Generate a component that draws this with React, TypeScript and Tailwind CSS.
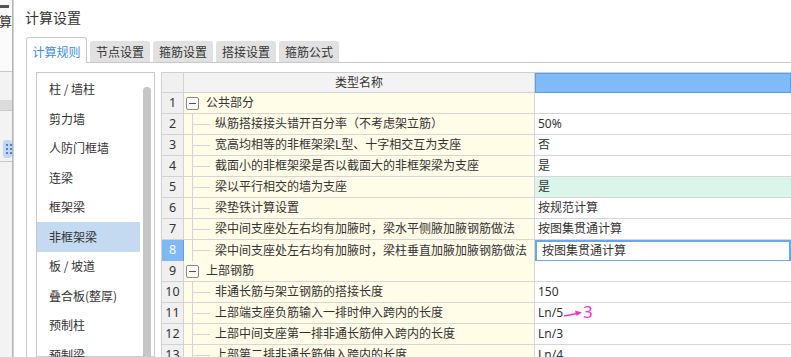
import React from "react";

type Row =
  | { n: number; group: true; name: string; value?: string }
  | { n: number; group?: false; name: string; value: string; green?: boolean; selected?: boolean; arrow?: boolean };

const rows: Row[] = [
  { n: 1, group: true, name: "公共部分" },
  { n: 2, name: "纵筋搭接接头错开百分率（不考虑架立筋）", value: "50%" },
  { n: 3, name: "宽高均相等的非框架梁L型、十字相交互为支座", value: "否" },
  { n: 4, name: "截面小的非框架梁是否以截面大的非框架梁为支座", value: "是" },
  { n: 5, name: "梁以平行相交的墙为支座", value: "是", green: true },
  { n: 6, name: "梁垫铁计算设置", value: "按规范计算" },
  { n: 7, name: "梁中间支座处左右均有加腋时，梁水平侧腋加腋钢筋做法", value: "按图集贯通计算" },
  { n: 8, name: "梁中间支座处左右均有加腋时，梁柱垂直加腋加腋钢筋做法", value: "按图集贯通计算", selected: true },
  { n: 9, group: true, name: "上部钢筋" },
  { n: 10, name: "非通长筋与架立钢筋的搭接长度", value: "150" },
  { n: 11, name: "上部端支座负筋输入一排时伸入跨内的长度", value: "Ln/5", arrow: true },
  { n: 12, name: "上部中间支座第一排非通长筋伸入跨内的长度", value: "Ln/3" },
  { n: 13, name: "上部第二排非通长筋伸入跨内的长度", value: "Ln/4" },
];

const listItems = ["柱 / 墙柱", "剪力墙", "人防门框墙", "连梁", "框架梁", "非框架梁", "板 / 坡道", "叠合板(整厚)", "预制柱", "预制梁"];

const tabs = ["节点设置", "箍筋设置", "搭接设置", "箍筋公式"];

function MinusBox() {
  return (
    <div className="w-[13px] h-[13px] border border-[#8a8a8a] rounded-[2px] bg-white flex items-center justify-center shrink-0">
      <div className="w-[7px] h-px bg-[#555]" />
    </div>
  );
}

export default function App() {
  return (
    <div className="w-[791px] h-[357px] overflow-hidden flex bg-white text-[#333] font-['Noto_Sans','Noto_Sans_CJK_SC',sans-serif]">
      {/* background app strip */}
      <div className="w-[12px] h-full flex flex-col shrink-0 overflow-hidden bg-[#f0f0f0]">
        <div className="h-[71px] bg-[#fbfbfb] flex flex-col">
          <div className="mt-[5px] w-[9px] h-[3px] bg-[#555]" />
          <div className="mt-[6px] -ml-[1px] text-[13px] leading-[14px] whitespace-nowrap font-['Noto_Sans_CJK_SC',sans-serif]">算设</div>
        </div>
        <div className="h-px bg-[#c8c8c8]" />
        <div className="h-[28px] bg-[#f3f3f3]" />
        <div className="h-[10px] bg-[#dcdcdc]" />
        <div className="h-px bg-[#c8c8c8]" />
        <div className="h-[29px] bg-[#f3f3f3]" />
        <div className="h-[18px] bg-[#f3f3f3] flex items-center">
          <div className="ml-[3px] w-[12px] h-[18px] rounded-[3px] bg-[#c3d6f2] flex items-center pl-[3px]">
            <svg width="6" height="12" viewBox="0 0 6 12">
              {[1, 5].map((x) =>
                [2, 6, 10].map((y) => <circle key={`${x}-${y}`} cx={x} cy={y} r="1.1" fill="#2f6fd0" />)
              )}
            </svg>
          </div>
        </div>
        <div className="h-[3px] bg-[#f3f3f3]" />
        <div className="h-px bg-[#c8c8c8]" />
        <div className="flex-1 bg-[#f3f3f3]" />
      </div>
      <div className="w-[2px] h-full bg-gradient-to-r from-[#a8a8a8] to-[#dedede] shrink-0" />

      {/* dialog */}
      <div className="flex-1 flex flex-col min-w-0">
        <div className="h-[37px] pl-[11px] pt-[7px] text-[14px] leading-[20px] font-['Noto_Sans_CJK_SC',sans-serif] text-[#333]">
          计算设置
        </div>

        <div className="h-[26px] ml-[12px] flex items-end gap-[3px] border-b border-[#c8c8c8] text-[12px] font-['Noto_Sans_CJK_SC',sans-serif]">
          <div className="w-[61px] h-[26px] -mb-px bg-white border border-b-0 border-[#c8c8c8] rounded-t-[3px] flex items-center justify-center pt-[2px] text-[#3d8ee8]">
            计算规则
          </div>
          {tabs.map((t) => (
            <div key={t} className="w-[60px] h-[21px] bg-[#e1e1e1] rounded-t-[3px] flex items-center justify-center pt-px text-[#333]">
              {t}
            </div>
          ))}
        </div>

        <div className="flex-1 ml-[12px] border-l border-[#c8c8c8] flex pl-[9px] pt-[9px] gap-[6px] min-h-0">
          {/* list */}
          <div className="w-[119px] border border-[#c8c8c8] flex shrink-0 text-[12px] font-['Noto_Sans_CJK_SC',sans-serif]">
            <div className="w-[103px] pt-[1.5px] flex flex-col">
              {listItems.map((it) => (
                <div
                  key={it}
                  className={`h-[29.5px] shrink-0 flex items-center pl-[12px] whitespace-nowrap ${it === "非框架梁" ? "bg-[#c4daf1]" : ""}`}
                >
                  {it}
                </div>
              ))}
            </div>
            <div className="flex-1 flex flex-col pt-[14px] pl-[3px]">
              <div className="w-[8px] flex-1 bg-[#c6c6c6] rounded-t-full" />
            </div>
          </div>

          {/* grid */}
          <div className="flex-1 min-w-0 border-t border-l border-[#cfcfcf] text-[12px] font-['Noto_Sans','Noto_Sans_CJK_SC',sans-serif]">
            <div className="grid grid-cols-[22px_351px_1fr] h-[20px]">
              <div className="bg-[#f0f0f0] border-r border-b border-[#d2d2d2]" />
              <div className="bg-[#f3f3f3] border-r border-b border-[#d2d2d2] flex items-center justify-center">类型名称</div>
              <div className="bg-[#80baf7] border border-[#5e9ee6]" />
            </div>
            {rows.map((r) => {
              const sel = !r.group && r.selected;
              return (
                <div key={r.n} className="grid grid-cols-[22px_351px_1fr] h-[21px]">
                  <div
                    className={`border-r border-b flex items-center justify-center text-[12.5px] ${
                      sel ? "bg-[#80b8f5] text-white border-[#5e9ee6]" : "bg-[#f0f0f0] border-[#d2d2d2] text-[#333]"
                    }`}
                  >
                    {r.n}
                  </div>
                  <div className="bg-[#fffce8] border-r border-b border-[#d6d6d6] flex items-center whitespace-nowrap overflow-hidden">
                    {r.group ? (
                      <>
                        <div className="ml-[2px]">
                          <MinusBox />
                        </div>
                        <span className="ml-[7px]">{r.name}</span>
                      </>
                    ) : (
                      <>
                        <div className="ml-[8px] w-px self-stretch bg-[#d4d4d4]" />
                        <div className="w-[17px] h-px bg-[#d4d4d4]" />
                        <span className="ml-[5px]">{r.name}</span>
                      </>
                    )}
                  </div>
                  <div
                    className={`relative flex items-center whitespace-nowrap ${
                      sel
                        ? "border-2 border-[#6aa6ea] pl-[5px] bg-white"
                        : `border-b border-[#d6d6d6] pl-[3px] ${!r.group && r.green ? "bg-[#dcf5ea]" : "bg-white"}`
                    }`}
                  >
                    {r.value ?? ""}
                    {!r.group && r.arrow && (
                      <div className="absolute left-[28px] top-[0px] flex items-center">
                        <svg width="20" height="14" viewBox="0 0 20 14">
                          <line x1="1" y1="10" x2="14" y2="7.5" stroke="#ff2fd0" strokeWidth="1.6" />
                          <polygon points="19,6.5 12,4.5 13.5,10" fill="#ff2fd0" />
                        </svg>
                        <span className="text-[17px] leading-[20px] text-[#ff2fd0] -mt-[1px]">3</span>
                      </div>
                    )}
                  </div>
                </div>
              );
            })}
          </div>
        </div>
      </div>
    </div>
  );
}
